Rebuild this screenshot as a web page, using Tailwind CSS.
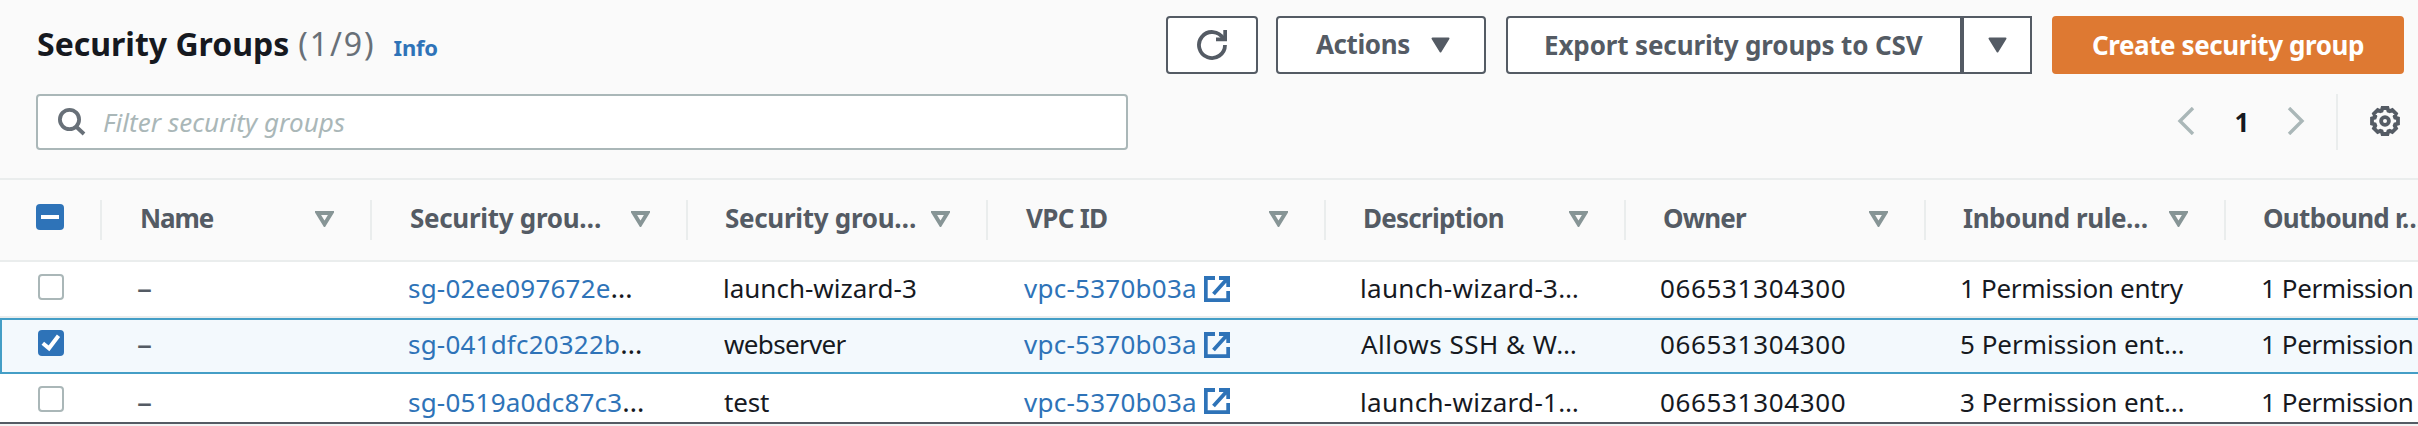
<!DOCTYPE html>
<html lang="en">
<head>
<meta charset="utf-8">
<title>Security Groups</title>
<script src="https://cdn.jsdelivr.net/npm/@tailwindcss/browser@4"></script>
</head>
<body class="flex h-[426px] w-[2418px] flex-col overflow-hidden bg-white font-['Noto_Sans',sans-serif] text-[26px] text-[#16191f]">
<svg class="hidden">
  <symbol id="caret" viewBox="0 0 19 16"><path d="M1.5 1.5h16L9.5 14.5z" fill="currentColor" stroke="currentColor" stroke-width="2" stroke-linejoin="round"/></symbol>
  <symbol id="filter" viewBox="0 0 19 16"><path d="M2.6 2h13.8L9.5 13.2z" fill="none" stroke="currentColor" stroke-width="3.9"/></symbol>
  <symbol id="external" viewBox="0 0 26 26"><path d="M11 2H1.8V24.2H24.2V15M15 2H24.2V11M23.5 2.5L9.5 18" fill="none" stroke="currentColor" stroke-width="3.8"/></symbol>
</svg>

<main class="flex h-[422px] shrink-0 flex-col overflow-hidden">
  <header class="flex h-[180px] shrink-0 flex-col gap-5 border-b-2 border-[#eaeded] bg-[#fafafa] pt-4 pr-[14px] pl-9">
    <div class="flex h-[58px] justify-between whitespace-nowrap">
      <div class="flex items-baseline leading-[55px]">
        <h1 class="pl-px text-[32px] font-bold">Security Groups</h1>
        <span class="ml-[9px] text-[32px] tracking-[1.9px] text-[#687078]">(1/9)</span>
        <a class="ml-[18px] text-[22px] font-bold tracking-[-0.2px] text-[#2e73b8]">Info</a>
      </div>
      <div class="flex font-bold leading-[52px] text-[#545b64]">
        <button class="flex w-[92px] items-center justify-center rounded-[4px] border-2 border-[#545b64] bg-white">
          <svg class="size-[30px]" viewBox="0 0 30 30" fill="none" stroke="currentColor" stroke-width="3.8"><path d="M28 15A13 13 0 1 1 26.2 8.4"/><path d="M19 9.4H28.2V0"/></svg>
        </button>
        <button class="ml-[18px] flex w-[210px] rounded-[4px] border-2 border-[#545b64] bg-white pl-[38px]">
          <span class="w-[115px] text-left tracking-[-0.4px]">Actions</span>
          <svg class="mt-[19px] h-4 w-[19px]"><use href="#caret"/></svg>
        </button>
        <button class="ml-5 w-[456px] rounded-l-[4px] border-2 border-[#545b64] bg-white pl-9 text-left tracking-[-0.13px]">Export security groups to CSV</button>
        <button class="flex w-[70px] justify-center border-2 border-[#545b64] bg-white">
          <svg class="mt-[19px] h-4 w-[19px]"><use href="#caret"/></svg>
        </button>
        <button class="ml-5 w-[352px] rounded-[4px] border-2 border-[#de7932] bg-[#de7932] tracking-[-0.42px] text-white">Create security group</button>
      </div>
    </div>
    <div class="flex h-14 justify-between">
      <div class="flex w-[1092px] items-center rounded-[4px] border-2 border-[#aab7b8] bg-white pl-5">
        <svg class="size-7 text-[#687078]" viewBox="0 0 28 28" fill="none" stroke="currentColor" stroke-width="3.8"><circle cx="11.5" cy="11.5" r="9.6"/><path d="M18 18.5L26 26"/></svg>
        <span class="ml-[17px] leading-[52px] tracking-[0.05px] text-[#aab7b8] italic">Filter security groups</span>
      </div>
      <div class="flex text-[#aab7b8]">
        <svg class="mt-[13px] h-7 w-[18px]" viewBox="0 0 18 28" fill="none" stroke="currentColor" stroke-width="3.4"><path d="M16 1L3 14L16 27"/></svg>
        <span class="w-[92px] pl-0.5 text-center leading-[56px] font-bold text-[#16191f]">1</span>
        <svg class="mt-[13px] h-7 w-[18px]" viewBox="0 0 18 28" fill="none" stroke="currentColor" stroke-width="3.4"><path d="M2 1L15 14L2 27"/></svg>
        <div class="ml-[31px] w-0.5 bg-[#eaeded]"></div>
        <svg class="mt-3 mr-1 ml-8 size-[30px] text-[#545b64]" viewBox="0 0 30 30" fill="none" stroke="currentColor" stroke-width="3.8"><path d="M28 12.5V17.5L25.2 18.4L24.7 19.7L26 22.3L22.3 26L19.7 24.7L18.4 25.2L17.5 28H12.5L11.6 25.2L10.3 24.7L7.7 26L4 22.3L5.3 19.7L4.8 18.4L2 17.5V12.5L4.8 11.6L5.3 10.3L4 7.7L7.7 4L10.3 5.3L11.6 4.8L12.5 2H17.5L18.4 4.8L19.7 5.3L22.3 4L26 7.7L24.7 10.3L25.2 11.6Z"/><circle cx="15" cy="15" r="3.9"/></svg>
      </div>
    </div>
  </header>

  <div class="grid h-[82px] w-[2466px] shrink-0 grid-cols-[102px_270px_316px_300px_338px_300px_300px_300px_240px] items-center border-b-2 border-[#eaeded] bg-[#fafafa] leading-9 font-bold whitespace-nowrap text-[#545b64]">
    <div class="flex h-10 border-r-2 border-[#eaeded] pt-1 pl-9">
      <span class="flex h-[26px] w-7 items-center justify-center rounded-[4px] bg-[#2e73b8]"><i class="h-1 w-[18px] bg-white"></i></span>
    </div>
    <div class="flex h-10 justify-between border-r-2 border-[#eaeded] pr-9 pl-[38px]"><span class="tracking-[-1.1px]">Name</span><svg class="mt-[11px] h-4 w-[19px] text-[#879596]"><use href="#filter"/></svg></div>
    <div class="flex h-10 justify-between border-r-2 border-[#eaeded] pr-9 pl-[38px]"><span class="tracking-[-0.3px]">Security grou…</span><svg class="mt-[11px] h-4 w-[19px] text-[#879596]"><use href="#filter"/></svg></div>
    <div class="flex h-10 justify-between border-r-2 border-[#eaeded] pr-9 pl-[37px]"><span class="tracking-[-0.3px]">Security grou…</span><svg class="mt-[11px] h-4 w-[19px] text-[#879596]"><use href="#filter"/></svg></div>
    <div class="flex h-10 justify-between border-r-2 border-[#eaeded] pr-9 pl-[38px]"><span class="tracking-[-0.7px]">VPC ID</span><svg class="mt-[11px] h-4 w-[19px] text-[#879596]"><use href="#filter"/></svg></div>
    <div class="flex h-10 justify-between border-r-2 border-[#eaeded] pr-9 pl-[37px]"><span class="tracking-[-0.75px]">Description</span><svg class="mt-[11px] h-4 w-[19px] text-[#879596]"><use href="#filter"/></svg></div>
    <div class="flex h-10 justify-between border-r-2 border-[#eaeded] pr-9 pl-[37px]"><span class="tracking-[-0.8px]">Owner</span><svg class="mt-[11px] h-4 w-[19px] text-[#879596]"><use href="#filter"/></svg></div>
    <div class="flex h-10 justify-between border-r-2 border-[#eaeded] pr-9 pl-[37px]"><span class="tracking-[-0.45px]">Inbound rule…</span><svg class="mt-[11px] h-4 w-[19px] text-[#879596]"><use href="#filter"/></svg></div>
    <div class="h-10 pl-[37px] tracking-[-0.7px]">Outbound r…</div>
  </div>

  <div class="grid h-14 w-[2466px] shrink-0 grid-cols-[102px_270px_316px_300px_338px_300px_300px_300px_240px] border-b-2 border-[#eaeded] leading-[52px] whitespace-nowrap">
    <div class="pt-3 pl-[38px]"><span class="block size-[26px] rounded-[4px] border-2 border-[#aab7b8] bg-white"></span></div>
    <div class="pl-[35px] text-[30px] text-[#545b64]">–</div>
    <div class="pl-9"><a class="tracking-[0.2px] text-[#2e73b8]">sg-02ee097672e</a><span class="text-[28px] leading-none">…</span></div>
    <div class="pl-[35px]">launch-wizard-3</div>
    <div class="flex pl-9 text-[#2e73b8]"><a class="w-[180px] tracking-[0.25px]">vpc-5370b03a</a><svg class="mt-[14px] size-[26px]"><use href="#external"/></svg></div>
    <div class="pl-[34px] tracking-[0.3px]">launch-wizard-3…</div>
    <div class="pl-[34px] tracking-[0.65px]">066531304300</div>
    <div class="pl-[34px] tracking-[-0.3px]">1 Permission entry</div>
    <div class="pl-[35px] tracking-[-0.4px]">1 Permission</div>
  </div>

  <div class="grid h-14 w-[2466px] shrink-0 grid-cols-[102px_270px_316px_300px_338px_300px_300px_300px_240px] bg-[#f3f9fd] leading-[52px] whitespace-nowrap inset-ring-2 inset-ring-[#449ec6]">
    <div class="pt-3 pl-[38px]"><span class="block size-[26px] rounded-[4px] bg-[#2e73b8]"><svg class="size-[26px]" viewBox="0 0 26 26" fill="none" stroke="#fff" stroke-width="4"><path d="M4.8 13.2L11 18.3L20.5 5.8"/></svg></span></div>
    <div class="pl-[35px] text-[30px] text-[#545b64]">–</div>
    <div class="pl-9"><a class="tracking-[0.2px] text-[#2e73b8]">sg-041dfc20322b</a><span class="text-[28px] leading-none">…</span></div>
    <div class="pl-9 tracking-[-0.65px]">webserver</div>
    <div class="flex pl-9 text-[#2e73b8]"><a class="w-[180px] tracking-[0.25px]">vpc-5370b03a</a><svg class="mt-[14px] size-[26px]"><use href="#external"/></svg></div>
    <div class="pl-[35px] tracking-[0.5px]">Allows SSH &amp; W…</div>
    <div class="pl-[34px] tracking-[0.65px]">066531304300</div>
    <div class="pl-[34px]">5 Permission ent…</div>
    <div class="pl-[35px] tracking-[-0.4px]">1 Permission</div>
  </div>

  <div class="grid h-14 w-[2466px] shrink-0 grid-cols-[102px_270px_316px_300px_338px_300px_300px_300px_240px] leading-[56px] whitespace-nowrap">
    <div class="pt-3 pl-[38px]"><span class="block size-[26px] rounded-[4px] border-2 border-[#aab7b8] bg-white"></span></div>
    <div class="pl-[35px] text-[30px] text-[#545b64]">–</div>
    <div class="pl-9"><a class="tracking-[0.2px] text-[#2e73b8]">sg-0519a0dc87c3</a><span class="text-[28px] leading-none">…</span></div>
    <div class="pl-9 tracking-[-0.2px]">test</div>
    <div class="flex pl-9 text-[#2e73b8]"><a class="w-[180px] tracking-[0.25px]">vpc-5370b03a</a><svg class="mt-[14px] size-[26px]"><use href="#external"/></svg></div>
    <div class="pl-[34px] tracking-[0.3px]">launch-wizard-1…</div>
    <div class="pl-[34px] tracking-[0.65px]">066531304300</div>
    <div class="pl-[34px]">3 Permission ent…</div>
    <div class="pl-[35px] tracking-[-0.4px]">1 Permission</div>
  </div>
</main>
<div class="h-1 shrink-0 border-t-2 border-[#545b64] bg-[#f2f3f3]"></div>
</body>
</html>
